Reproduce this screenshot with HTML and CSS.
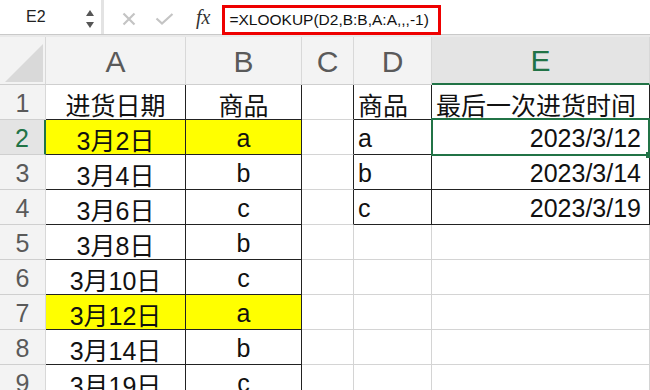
FILE: index.html
```html
<!DOCTYPE html>
<html lang="zh">
<head>
    <meta charset="UTF-8">
    <title>XLOOKUP</title>
    <link rel="stylesheet" href="styles.css">
</head>
<body>
    <div class="topbar">
        <div class="namebox">
            <span class="ref">E2</span>
            <span class="spin">
                <svg width="10" height="20" viewBox="0 0 10 20"><path d="M1 7 L5 1 L9 7 Z" fill="#555"/><path d="M1 13 L9 13 L5 19 Z" fill="#555"/></svg>
            </span>
        </div>
        <div class="fbar">
            <svg class="ico" width="14" height="14" viewBox="0 0 14 14"><path d="M1.5 1.5 L12.5 12.5 M12.5 1.5 L1.5 12.5" stroke="#c4c4c4" stroke-width="2.2" fill="none"/></svg>
            <svg class="ico ok" width="19" height="12" viewBox="0 0 19 12"><path d="M1.5 5.5 L7 10.5 L17.5 1" stroke="#c4c4c4" stroke-width="2.2" fill="none"/></svg>
            <span class="fx">fx</span>
            <div class="formula">=XLOOKUP(D2,B:B,A:A,,,-1)</div>
        </div>
    </div>
    <div class="band"></div>

    <div class="sheet">
        <div class="hd corner">
            <svg width="44" height="44" viewBox="0 0 44 44"><path d="M42 4 L42 42 L4 42 Z" fill="#d9d9d9"/></svg>
        </div>
        <div class="hd col">A</div>
        <div class="hd col">B</div>
        <div class="hd col">C</div>
        <div class="hd col">D</div>
        <div class="hd col sel">E</div>

        <div class="hd row">1</div>
        <div class="c t mid">进货日期</div>
        <div class="c t mid">商品</div>
        <div class="c tl"></div>
        <div class="c t">商品</div>
        <div class="c t">最后一次进货时间</div>

        <div class="hd row sel">2</div>
        <div class="c t mid hl">3月2日</div>
        <div class="c t mid hl">a</div>
        <div class="c tl"></div>
        <div class="c t">a</div>
        <div class="c t num active">2023/3/12</div>

        <div class="hd row">3</div>
        <div class="c t mid">3月4日</div>
        <div class="c t mid">b</div>
        <div class="c tl"></div>
        <div class="c t">b</div>
        <div class="c t num">2023/3/14</div>

        <div class="hd row">4</div>
        <div class="c t mid">3月6日</div>
        <div class="c t mid">c</div>
        <div class="c tl"></div>
        <div class="c t">c</div>
        <div class="c t num">2023/3/19</div>

        <div class="hd row">5</div>
        <div class="c t mid">3月8日</div>
        <div class="c t mid">b</div>
        <div class="c"></div>
        <div class="c"></div>
        <div class="c"></div>

        <div class="hd row">6</div>
        <div class="c t mid">3月10日</div>
        <div class="c t mid">c</div>
        <div class="c"></div>
        <div class="c"></div>
        <div class="c"></div>

        <div class="hd row">7</div>
        <div class="c t mid hl">3月12日</div>
        <div class="c t mid hl">a</div>
        <div class="c"></div>
        <div class="c"></div>
        <div class="c"></div>

        <div class="hd row">8</div>
        <div class="c t mid">3月14日</div>
        <div class="c t mid">b</div>
        <div class="c"></div>
        <div class="c"></div>
        <div class="c"></div>

        <div class="hd row">9</div>
        <div class="c t mid">3月19日</div>
        <div class="c t mid">c</div>
        <div class="c"></div>
        <div class="c"></div>
        <div class="c"></div>
    </div>
</body>
</html>
```

FILE: styles.css
```css
* {
    box-sizing: border-box;
}
body {
    margin: 0;
    background-color: #fff;
    font-family: "Liberation Sans", "Noto Sans CJK SC", sans-serif;
    overflow: hidden;
}
.topbar {
    display: flex;
    height: 35px;
    border-bottom: 1px solid #c9c9c9;
}
.namebox {
    width: 104px;
    display: flex;
    align-items: center;
    justify-content: space-between;
    padding: 0 6px 0 26px;
    border-right: 3px solid #e3e3e3;
    font-size: 16px;
    color: #222;
}
.spin svg {
    display: block;
    margin-top: 3px;
}
.fbar {
    flex: 1;
    display: flex;
    align-items: center;
    padding-left: 18px;
}
.ico {
    margin-top: 4px;
}
.ok {
    margin-left: 19px;
}
.fx {
    font-family: "Liberation Serif", "DejaVu Serif", serif;
    font-style: italic;
    font-size: 20px;
    color: #333;
    margin-left: 22px;
    margin-top: 1px;
}
.formula {
    margin-left: 12px;
    height: 30px;
    margin-top: 5px;
    width: 219px;
    border: 3px solid #ee0000;
    padding-left: 4px;
    font-size: 15.5px;
    line-height: 24px;
    color: #111;
}
.band {
    height: 2px;
    background-color: #e9e9e9;
}
.sheet {
    display: grid;
    grid-template-columns: 46px 140px 116px 52px 78px 218px;
    grid-template-rows: 48px;
    grid-auto-rows: 35px;
}
.hd {
    background-color: #f3f3f3;
    border-right: 1px solid #d8d8d8;
    border-bottom: 1px solid #cfcfcf;
    color: #5a5a5a;
    display: flex;
    align-items: center;
    justify-content: center;
}
.corner {
    align-items: flex-end;
    justify-content: flex-end;
}
.corner svg {
    display: block;
}
.col {
    font-size: 30px;
    padding-top: 2px;
}
.col.sel {
    color: #217346;
    border-bottom: 2px solid #217346;
    background-color: #e4e4e4;
}
.row {
    font-size: 25px;
    padding-top: 2px;
}
.row.sel {
    color: #217346;
    border-right: 2px solid #217346;
    background-color: #e4e4e4;
}
.c {
    border-right: 1px solid #d4d4d4;
    border-bottom: 1px solid #d4d4d4;
    font-size: 25px;
    color: #111;
    display: flex;
    align-items: center;
    padding: 3px 4px 0;
    white-space: nowrap;
}
.t {
    border-right-color: #222;
    border-bottom-color: #222;
}
.tl {
    border-right-color: #222;
}
.mid {
    justify-content: center;
}
.num {
    justify-content: flex-end;
    padding-right: 8px;
}
.hl {
    background-color: #ffff00;
}
.active {
    position: relative;
}
.active::after {
    content: "";
    position: absolute;
    left: -1px;
    top: -2px;
    right: -1px;
    bottom: -2px;
    border: 2px solid #217346;
}
.active::before {
    content: "";
    position: absolute;
    right: -3px;
    bottom: -4px;
    width: 6px;
    height: 6px;
    background-color: #217346;
    z-index: 1;
}
```
